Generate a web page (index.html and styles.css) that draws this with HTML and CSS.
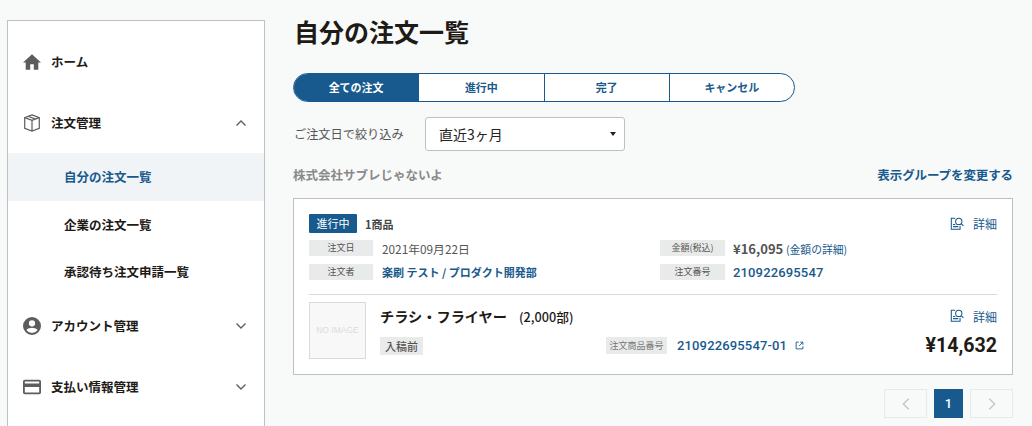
FILE: index.html
```html
<!DOCTYPE html>
<html lang="ja">
<head>
<meta charset="utf-8">
<title>自分の注文一覧</title>
<link rel="stylesheet" href="styles.css">
</head>
<body>
<div class="page">
  <nav class="side">
    <div class="nav-item">
      <svg class="nav-icon" viewBox="2 3 20 17"><path d="M10 20v-6h4v6h5v-8h3L12 3 2 12h3v8z"/></svg>
      <span>ホーム</span>
    </div>
    <div class="nav-item">
      <svg class="nav-icon line" viewBox="2.500 1.500 19 21"><path d="M12 2.500l8.500 3.200v12.400L12 21.500l-8.500-3.400V5.700z"/><path d="M3.500 5.700L12 9l8.500-3.300M12 9v12.500M7.500 4.200l8.500 3.300"/></svg>
      <span>注文管理</span>
      <svg class="chev" viewBox="0 0 12 8"><path d="M1.500 6.500L6 2l4.500 4.500"/></svg>
    </div>
    <div class="sub active">自分の注文一覧</div>
    <div class="sub">企業の注文一覧</div>
    <div class="sub">承認待ち注文申請一覧</div>
    <div class="nav-item">
      <svg class="nav-icon" viewBox="2 2 20 20"><path d="M12 2a10 10 0 100 20 10 10 0 000-20zm0 3.500a3.500 3.500 0 110 7 3.500 3.500 0 010-7zm0 14.300a7.800 7.800 0 01-6.300-3.300c1.500-1.600 4.100-2.500 6.300-2.500s4.800.9 6.300 2.500a7.800 7.800 0 01-6.300 3.300z"/></svg>
      <span>アカウント管理</span>
      <svg class="chev" viewBox="0 0 12 8"><path d="M1.500 1.500L6 6l4.500-4.500"/></svg>
    </div>
    <div class="nav-item">
      <svg class="nav-icon" viewBox="2 3 20 18"><path d="M20 4H4a2 2 0 00-2 2v12a2 2 0 002 2h16a2 2 0 002-2V6a2 2 0 00-2-2zm0 14H4v-6h16zm0-10H4V6h16z"/></svg>
      <span>支払い情報管理</span>
      <svg class="chev" viewBox="0 0 12 8"><path d="M1.500 1.500L6 6l4.500-4.500"/></svg>
    </div>
  </nav>

  <main class="main">
    <h1 class="title">自分の注文一覧</h1>
    <div class="tabs">
      <div class="tab on">全ての注文</div>
      <div class="tab">進行中</div>
      <div class="tab">完了</div>
      <div class="tab">キャンセル</div>
    </div>
    <div class="filter">
      <span class="filter-label">ご注文日で絞り込み</span>
      <div class="select"><span>直近3ヶ月</span><i class="caret"></i></div>
    </div>
    <div class="group">
      <span class="company">株式会社サブレじゃないよ</span>
      <a class="change">表示グループを変更する</a>
    </div>
    <section class="card">
      <div class="order">
        <div class="order-top">
          <span class="status">進行中</span>
          <span class="count">1商品</span>
          <a class="detail">
            <svg class="detail-icon" viewBox="0 0 16 16"><path d="M6 1.500H1.500v12.500h10V10M3.500 8.500h2.500M3.500 11h6"/><circle cx="10" cy="5" r="3.600"/><path d="M12.600 7.600l2.700 2.400"/></svg>
            <span>詳細</span>
          </a>
        </div>
        <div class="meta">
          <div class="meta-cell"><span class="key key-l">注文日</span><span class="val">2021年09月22日</span></div>
          <div class="meta-cell"><span class="key key-r">金額(税込)</span><span class="val"><b class="price">¥16,095</b> <a class="link">(金額の詳細)</a></span></div>
          <div class="meta-cell"><span class="key key-l">注文者</span><a class="strong">楽刷 テスト / プロダクト開発部</a></div>
          <div class="meta-cell"><span class="key key-r">注文番号</span><a class="strong num">210922695547</a></div>
        </div>
      </div>
      <div class="item">
        <div class="thumb">NO IMAGE</div>
        <div class="item-body">
          <div class="item-top">
            <div class="item-name">チラシ・フライヤー<small>(2,000部)</small></div>
            <a class="detail">
              <svg class="detail-icon" viewBox="0 0 16 16"><path d="M6 1.500H1.500v12.500h10V10M3.500 8.500h2.500M3.500 11h6"/><circle cx="10" cy="5" r="3.600"/><path d="M12.600 7.600l2.700 2.400"/></svg>
              <span>詳細</span>
            </a>
          </div>
          <div class="item-bottom">
            <span class="state">入稿前</span>
            <div class="item-no">
              <span class="no-key">注文商品番号</span>
              <a class="strong num">210922695547-01</a>
              <svg class="ext" viewBox="0 0 12 12"><path d="M5 1.500H1.500v9h9V7M7 1.500h3.500V5M10.500 1.500L5.500 6.500"/></svg>
            </div>
            <b class="total">¥14,632</b>
          </div>
        </div>
      </div>
    </section>
    <div class="pager">
      <span class="pg"><svg viewBox="0 0 12 16"><path d="M9 2L3 8l6 6"/></svg></span>
      <span class="pg cur">1</span>
      <span class="pg"><svg viewBox="0 0 12 16"><path d="M3 2l6 6-6 6"/></svg></span>
    </div>
  </main>
</div>
</body>
</html>
```
FILE: styles.css
```css
* { box-sizing: border-box; }
html, body { margin: 0; height: 426px; overflow: hidden; }
body {
  background: #f8f9f9;
  color: #1e1a16;
  font-family: "Noto Sans CJK JP", "Noto Sans", sans-serif;
  font-size: 12px;
}
a { color: #185a8d; text-decoration: none; }
.page { display: flex; align-items: flex-start; height: 426px; overflow: hidden; padding: 20px 19px 0 7px; gap: 28px; }

.side {
  width: 258px;
  height: 440px;
  flex: none;
  background: #fff;
  border: 1px solid #bfc1c1;
  padding-top: 10px;
}
.nav-item {
  display: flex;
  align-items: center;
  height: 61px;
  padding: 0 17px 0 15px;
  font-size: 12.500px;
  font-weight: 700;
}
.nav-icon { width: 18px; height: 18px; margin-right: 10px; fill: #5d5d5d; flex: none; }
.nav-icon.line { fill: none; stroke: #5d5d5d; stroke-width: 1.400; }
.chev { width: 12px; height: 8px; margin-left: auto; fill: none; stroke: #5d5d5d; stroke-width: 1.400; }
.sub {
  height: 47px;
  line-height: 47px;
  padding-left: 56px;
  font-size: 12.500px;
  font-weight: 700;
}
.sub.active { height: 48px; line-height: 48px; background: #f1f4f7; color: #185a8d; }

.main { flex: 1; min-width: 0; }
.title { margin: -1px 0 0; height: 54px; font-size: 25px; line-height: 24px; font-weight: 700; padding-left: 1px; }
.tabs {
  display: flex;
  width: 502px;
  height: 29px;
  border: 1px solid #185a8d;
  border-radius: 15px;
  overflow: hidden;
  background: #fff;
}
.tab {
  flex: 1;
  border-left: 1px solid #185a8d;
  color: #185a8d;
  font-size: 11px;
  font-weight: 700;
  text-align: center;
  line-height: 27px;
}
.tab.on { background: #185a8d; color: #fff; border-left: 0; }
.filter { display: flex; align-items: center; margin-top: 15px; height: 34px; }
.filter-label { width: 132px; font-size: 12.200px; color: #555; padding-left: 1px; }
.select {
  display: flex;
  align-items: center;
  justify-content: space-between;
  width: 200px;
  height: 34px;
  padding: 0 8px 0 13px;
  background: #fff;
  border: 1px solid #bfc1c1;
  border-radius: 3px;
  font-size: 14px;
  color: #222;
}
.caret { width: 0; height: 0; border: 3px solid transparent; border-top: 4px solid #222; border-bottom: 0; }
.group { display: flex; justify-content: space-between; align-items: center; margin-top: 14px; height: 18px; }
.company { font-size: 12.500px; font-weight: 700; color: #8a8a8a; }
.change { font-size: 12.500px; letter-spacing: -.1px; font-weight: 700; }

.card {
  margin-top: 15px;
  height: 177px;
  background: #fff;
  border: 1px solid #bfc1c1;
  padding: 0 15px;
}
.order { height: 96px; padding-top: 15px; border-bottom: 1px solid #d9dada; }
.order-top { display: flex; align-items: center; height: 19px; }
.status {
  width: 48px;
  height: 19px;
  line-height: 19px;
  text-align: center;
  background: #185a8d;
  color: #fff;
  font-size: 11px;
  border-radius: 1px;
}
.count { margin-left: 8px; font-size: 11px; font-weight: 700; color: #444; }
.detail { display: flex; align-items: center; margin-left: auto; font-size: 12px; }
.detail-icon { width: 14px; height: 14px; margin-right: 9px; fill: none; stroke: #185a8d; stroke-width: 1.200; }
.meta { display: grid; grid-template-columns: 351px 1fr; row-gap: 8px; margin-top: 7px; }
.meta-cell { display: flex; align-items: center; height: 16px; }
.key {
  height: 16px;
  line-height: 16px;
  background: #e9eaea;
  color: #555;
  text-align: center;
  font-size: 9px;
}
.key-l { width: 64px; margin-right: 9px; }
.key-r { width: 65px; margin-right: 8px; }
.val { font-size: 11.800px; color: #555; }
.price { font-size: 13px; font-weight: 700; }
.link { font-size: 10.800px; }
.strong { font-size: 11px; font-weight: 700; color: #185a8d; }
.num { font-family: "Roboto", "Noto Sans CJK JP", sans-serif; font-size: 13px; font-weight: 500; letter-spacing: .15px; }

.item { display: flex; padding-top: 7px; }
.thumb {
  width: 57px;
  height: 57px;
  flex: none;
  border: 1px solid #d9dada;
  background: #f8f8f8;
  color: #dcdcdc;
  font-family: "Liberation Sans", sans-serif;
  font-size: 8.500px;
  line-height: 55px;
  text-align: center;
  white-space: nowrap;
}
.item-body { flex: 1; margin-left: 14px; min-width: 0; }
.item-top { display: flex; align-items: center; height: 28px; }
.item-name { font-size: 14.200px; font-weight: 700; }
.item-name small { margin-left: 12px; font-size: 12.700px; font-weight: 500; }
.item-bottom { display: flex; align-items: center; margin-top: 2px; height: 27px; }
.state {
  width: 43px;
  height: 18px;
  line-height: 18px;
  background: #e9eaea;
  color: #555;
  font-size: 11px;
  font-weight: 500;
  text-align: center;
}
.item-no { display: flex; align-items: center; margin-left: 183px; }
.no-key {
  width: 61px;
  height: 17px;
  line-height: 17px;
  background: #e9eaea;
  color: #777;
  text-align: center;
  font-size: 9px;
  margin-right: 10px;
}
.ext { width: 9px; height: 9px; margin-left: 8px; fill: none; stroke: #185a8d; stroke-width: 1.200; }
.total { margin-left: auto; font-family: "Roboto", sans-serif; font-size: 19.600px; font-weight: 700; }

.pager { display: flex; justify-content: flex-end; gap: 7px; margin-top: 14px; }
.pg {
  display: flex;
  align-items: center;
  justify-content: center;
  width: 43px;
  height: 29px;
  border: 1px solid #e8e9e9;
}
.pg svg { width: 12px; height: 14px; fill: none; stroke: #c4c6c6; stroke-width: 1.600; }
.pg.cur { width: 29px; background: #185a8d; border-color: #185a8d; color: #fff; font-family: "Roboto", sans-serif; font-size: 13px; font-weight: 500; }
```
